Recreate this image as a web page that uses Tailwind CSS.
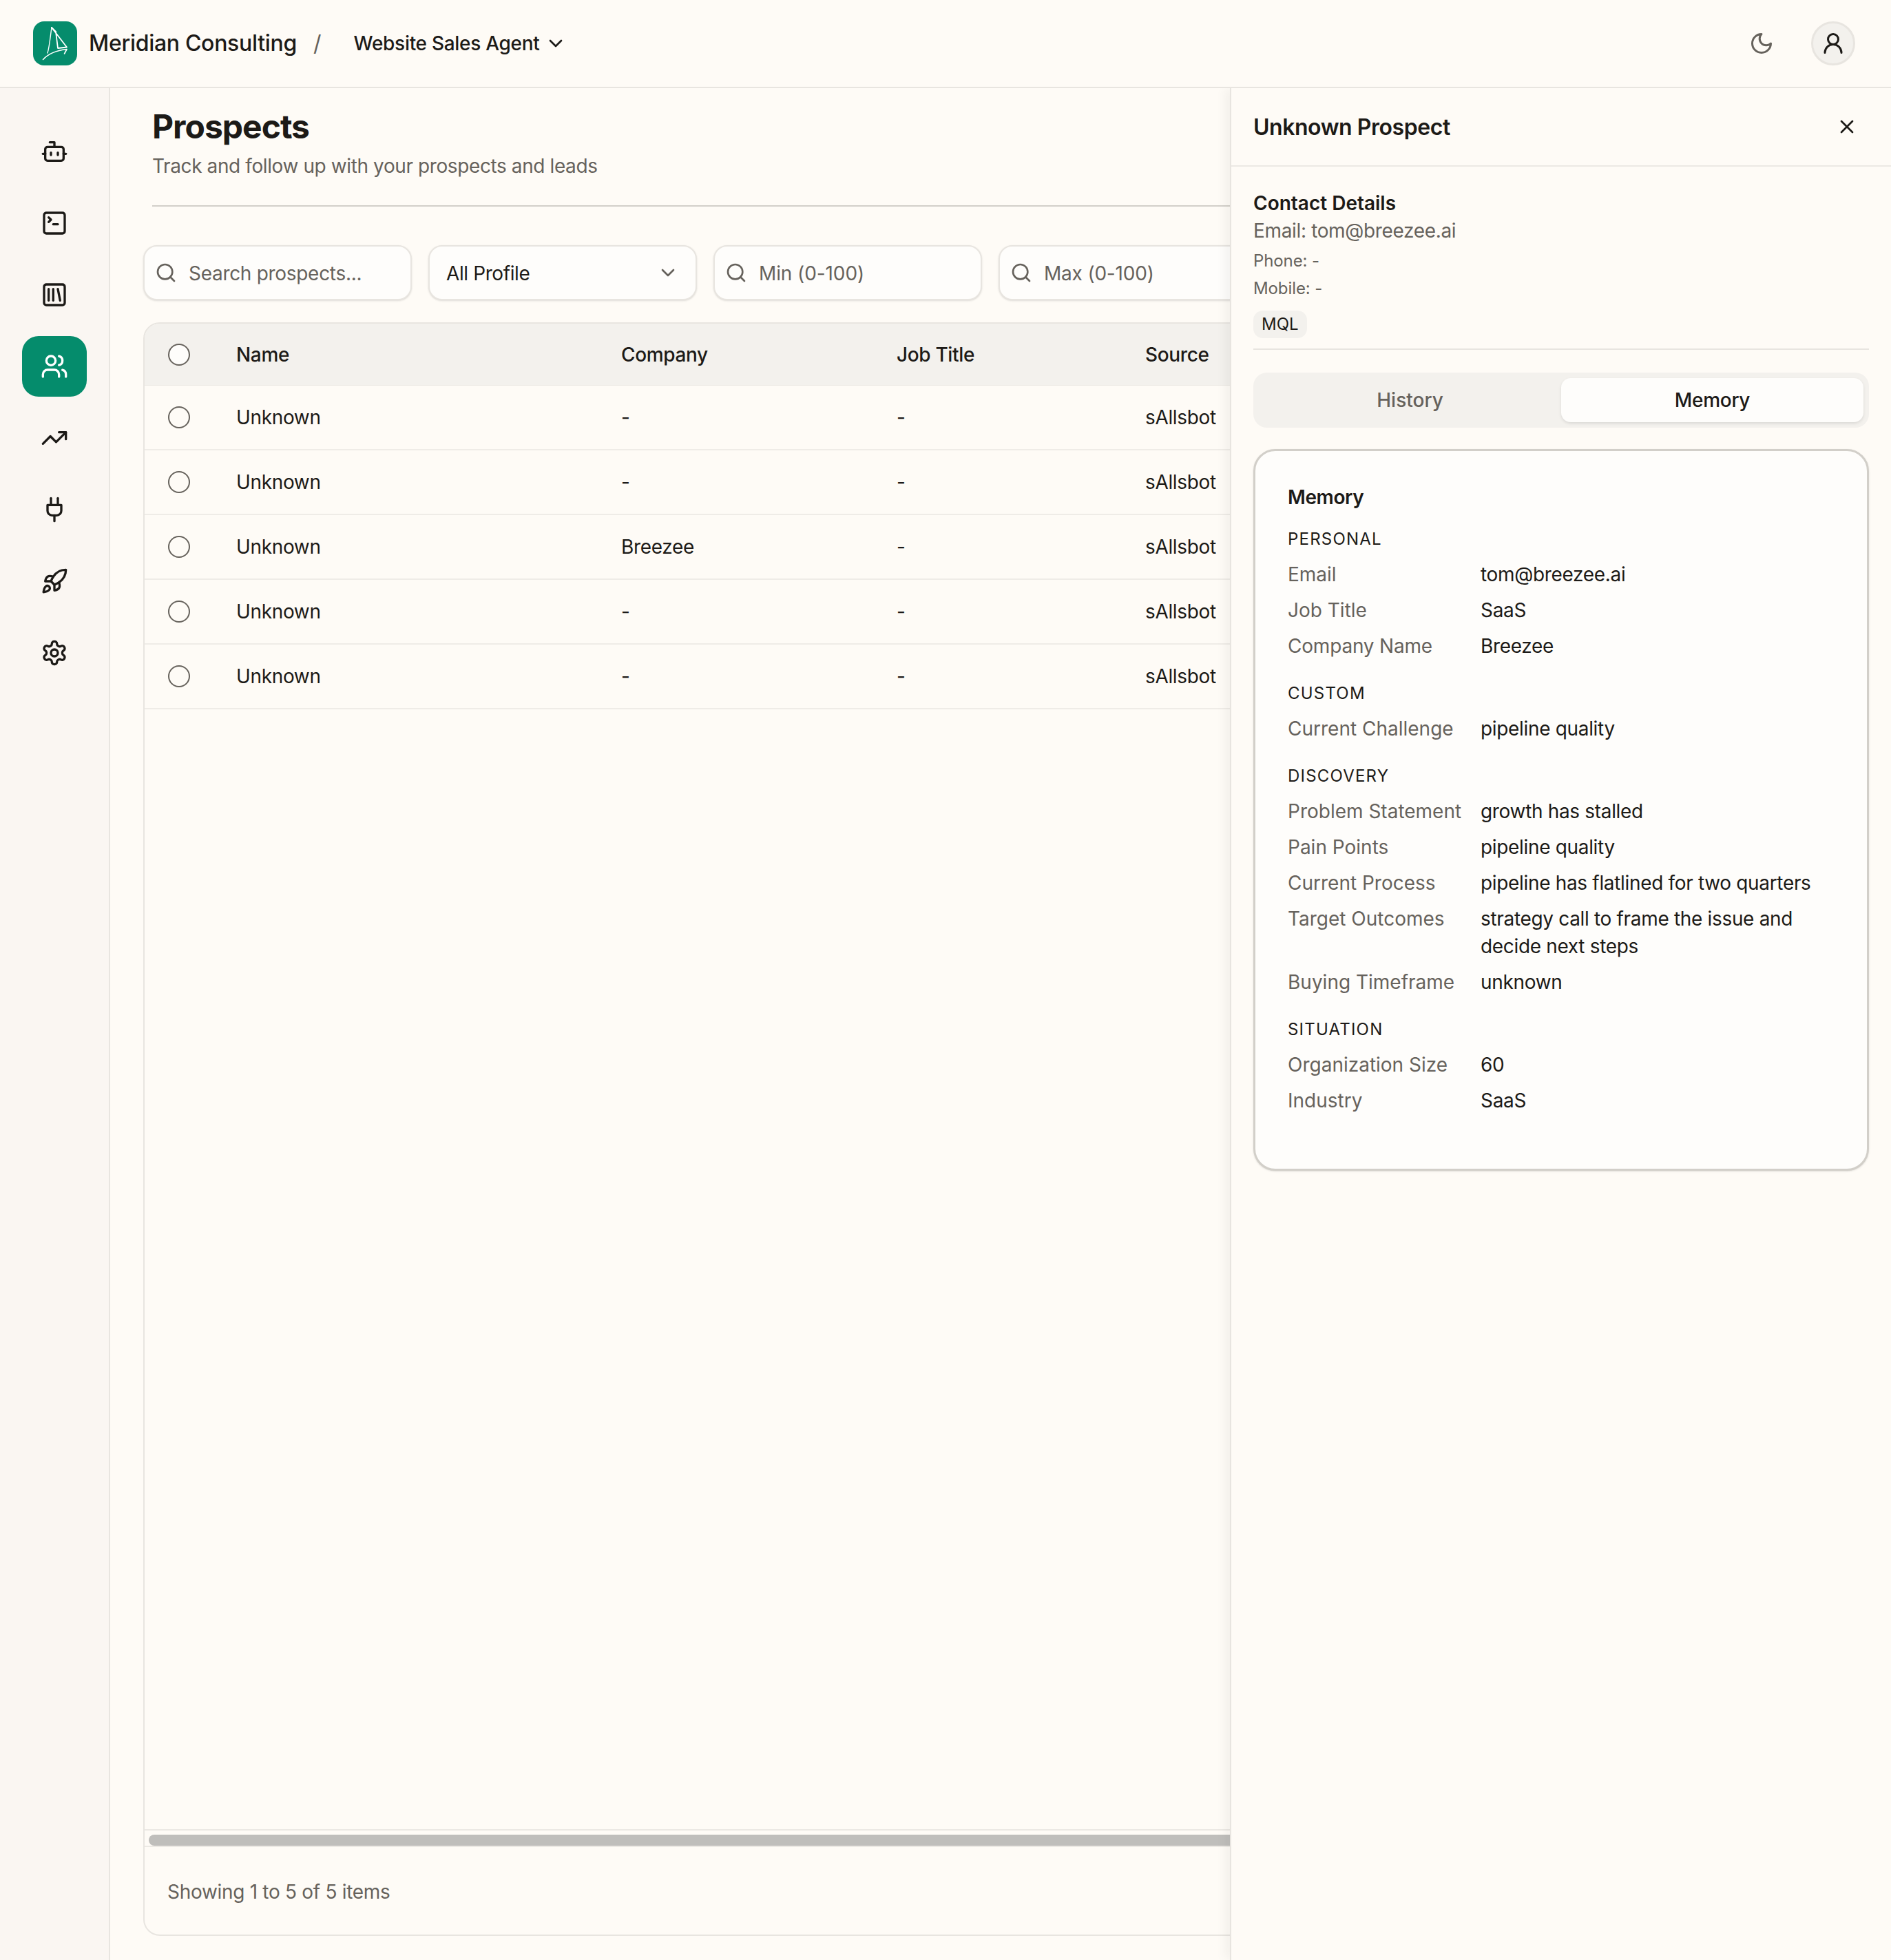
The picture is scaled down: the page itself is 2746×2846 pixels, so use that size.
<!DOCTYPE html>
<html lang="en">
<head>
<meta charset="utf-8">
<title>Prospects</title>
<script src="https://cdn.jsdelivr.net/npm/@tailwindcss/browser@4"></script>
</head>
<body class="m-0 font-['Inter',sans-serif] text-[#1c1a17] bg-[#fefbf6]">
<div class="relative w-[2746px] h-[2846px] overflow-hidden flex flex-col bg-[#fefbf6]">
  <!-- Top bar -->
  <header class="relative z-20 h-[128px] shrink-0 flex items-center pl-[48px] pr-[48px] border-b-2 border-[#e8e5e0] bg-[#fefbf6]">
    <div class="w-[64px] h-[64px] rounded-[16px] bg-[#058c6c] flex items-center justify-center">
      <svg viewBox="0 0 64 64" class="w-[64px] h-[64px]" fill="none" stroke="#fff" stroke-linecap="round" stroke-linejoin="round">
        <path d="M27 9 C25 22 24 36 21 46" stroke-width="1.4"/>
        <path d="M27 9 L49 37.5 L36 39 L33 15" stroke-width="1.8"/>
        <path d="M27 9 L33 15" stroke-width="1.8"/>
        <path d="M14.5 55.5 C22 47 36 42 49 40.5 L45.5 47" stroke-width="1.6"/>
      </svg>
    </div>
    <span class="ml-[17px] text-[32px] leading-[40px] font-medium tracking-[-0.3px]">Meridian Consulting</span>
    <span class="ml-[24px] text-[32px] leading-[40px] text-[#66625c]">/</span>
    <span class="ml-[47px] text-[28px] leading-[40px] font-medium tracking-[-0.3px]">Website Sales Agent</span>
    <svg class="ml-[8px] w-[32px] h-[32px]" viewBox="0 0 24 24" fill="none" stroke="currentColor" stroke-width="2" stroke-linecap="round" stroke-linejoin="round"><path d="m6 9 6 6 6-6"/></svg>
    <div class="ml-auto flex items-center">
      <svg class="w-[36px] h-[36px] text-[#66625c]" viewBox="0 0 24 24" fill="none" stroke="currentColor" stroke-width="2" stroke-linecap="round" stroke-linejoin="round"><path d="M12 3a6 6 0 0 0 9 9 9 9 0 1 1-9-9Z"/></svg>
      <div class="ml-[54px] mr-[4px] w-[64px] h-[64px] rounded-full bg-[#f3f1ed] border-[3px] border-[#e8e5e0] flex items-center justify-center">
        <svg class="w-[36px] h-[36px]" viewBox="0 0 24 24" fill="none" stroke="currentColor" stroke-width="2" stroke-linecap="round" stroke-linejoin="round"><circle cx="12" cy="8" r="5"/><path d="M20 21a8 8 0 0 0-16 0"/></svg>
      </div>
    </div>
  </header>

  <div class="flex flex-1 min-h-0">
    <!-- Sidebar -->
    <nav class="w-[160px] shrink-0 bg-[#faf6f2] border-r-2 border-[#e8e5e0] flex flex-col gap-[16px] pl-[32px] pr-[32px] pt-[48px]">
      <div class="h-[88px] flex items-center justify-center">
        <svg class="w-[40px] h-[40px]" viewBox="0 0 24 24" fill="none" stroke="currentColor" stroke-width="2" stroke-linecap="round" stroke-linejoin="round"><path d="M12 8V4H8"/><rect width="16" height="12" x="4" y="8" rx="2"/><path d="M2 14h2"/><path d="M20 14h2"/><path d="M15 13v2"/><path d="M9 13v2"/></svg>
      </div>
      <div class="h-[88px] flex items-center justify-center">
        <svg class="w-[40px] h-[40px]" viewBox="0 0 24 24" fill="none" stroke="currentColor" stroke-width="2" stroke-linecap="round" stroke-linejoin="round"><path d="m7 11 2-2-2-2"/><path d="M11 13h4"/><rect width="18" height="18" x="3" y="3" rx="2"/></svg>
      </div>
      <div class="h-[88px] flex items-center justify-center">
        <svg class="w-[40px] h-[40px]" viewBox="0 0 24 24" fill="none" stroke="currentColor" stroke-width="2" stroke-linecap="round" stroke-linejoin="round"><rect width="18" height="18" x="3" y="3" rx="2"/><path d="M7 7v10"/><path d="M11 7v10"/><path d="m15 7 2 10"/></svg>
      </div>
      <div class="h-[88px] rounded-[24px] bg-[#058c6c] text-white flex items-center justify-center">
        <svg class="w-[40px] h-[40px]" viewBox="0 0 24 24" fill="none" stroke="currentColor" stroke-width="2" stroke-linecap="round" stroke-linejoin="round"><path d="M16 21v-2a4 4 0 0 0-4-4H6a4 4 0 0 0-4 4v2"/><path d="M16 3.128a4 4 0 0 1 0 7.744"/><path d="M22 21v-2a4 4 0 0 0-3-3.87"/><circle cx="9" cy="7" r="4"/></svg>
      </div>
      <div class="h-[88px] flex items-center justify-center">
        <svg class="w-[40px] h-[40px]" viewBox="0 0 24 24" fill="none" stroke="currentColor" stroke-width="2" stroke-linecap="round" stroke-linejoin="round"><polyline points="22 7 13.5 15.5 8.5 10.5 2 17"/><polyline points="16 7 22 7 22 13"/></svg>
      </div>
      <div class="h-[88px] flex items-center justify-center">
        <svg class="w-[40px] h-[40px]" viewBox="0 0 24 24" fill="none" stroke="currentColor" stroke-width="2" stroke-linecap="round" stroke-linejoin="round"><path d="M12 22v-5"/><path d="M9 8V2"/><path d="M15 8V2"/><path d="M18 8v5a4 4 0 0 1-4 4h-4a4 4 0 0 1-4-4V8Z"/></svg>
      </div>
      <div class="h-[88px] flex items-center justify-center">
        <svg class="w-[40px] h-[40px]" viewBox="0 0 24 24" fill="none" stroke="currentColor" stroke-width="2" stroke-linecap="round" stroke-linejoin="round"><path d="M4.5 16.5c-1.5 1.26-2 5-2 5s3.74-.5 5-2c.71-.84.7-2.13-.09-2.91a2.18 2.18 0 0 0-2.91-.09z"/><path d="m12 15-3-3a22 22 0 0 1 2-3.95A12.88 12.88 0 0 1 22 2c0 2.72-.78 7.5-6 11a22.35 22.35 0 0 1-4 2z"/><path d="M9 12H4s.55-3.03 2-4c1.62-1.08 5 0 5 0"/><path d="M12 15v5s3.03-.55 4-2c1.08-1.62 0-5 0-5"/></svg>
      </div>
      <div class="h-[88px] flex items-center justify-center">
        <svg class="w-[40px] h-[40px]" viewBox="0 0 24 24" fill="none" stroke="currentColor" stroke-width="2" stroke-linecap="round" stroke-linejoin="round"><path d="M12.22 2h-.44a2 2 0 0 0-2 2v.18a2 2 0 0 1-1 1.73l-.43.25a2 2 0 0 1-2 0l-.15-.08a2 2 0 0 0-2.73.73l-.22.38a2 2 0 0 0 .73 2.73l.15.1a2 2 0 0 1 1 1.72v.51a2 2 0 0 1-1 1.74l-.15.09a2 2 0 0 0-.73 2.73l.22.38a2 2 0 0 0 2.73.73l.15-.08a2 2 0 0 1 2 0l.43.25a2 2 0 0 1 1 1.73V20a2 2 0 0 0 2 2h.44a2 2 0 0 0 2-2v-.18a2 2 0 0 1 1-1.73l.43-.25a2 2 0 0 1 2 0l.15.08a2 2 0 0 0 2.73-.73l.22-.39a2 2 0 0 0-.73-2.73l-.15-.08a2 2 0 0 1-1-1.74v-.5a2 2 0 0 1 1-1.74l.15-.09a2 2 0 0 0 .73-2.73l-.22-.38a2 2 0 0 0-2.73-.73l-.15.08a2 2 0 0 1-2 0l-.43-.25a2 2 0 0 1-1-1.73V4a2 2 0 0 0-2-2z"/><circle cx="12" cy="12" r="3"/></svg>
      </div>
    </nav>

    <!-- Main -->
    <main class="flex-1 min-w-0 flex flex-col pl-[48px] pb-[35px] overflow-hidden">
      <div class="ml-[13px] pt-[24px]">
        <h1 class="text-[48px] leading-[64px] font-bold tracking-[-1px]">Prospects</h1>
        <p class="mt-[5px] text-[28px] leading-[40px] text-[#66625c] tracking-[-0.4px]">Track and follow up with your prospects and leads</p>
        <div class="mt-[37px] h-[2px] bg-[#d2cfc9]"></div>
      </div>

      <div class="mt-[56px] flex gap-[24px]">
        <div class="w-[390px] h-[80px] shrink-0 rounded-[20px] border-2 border-[#e8e5e0] bg-[#fefdfb] shadow-sm flex items-center pl-[15px] text-[#66625c]">
          <svg class="w-[32px] h-[32px] shrink-0" viewBox="0 0 24 24" fill="none" stroke="currentColor" stroke-width="2" stroke-linecap="round" stroke-linejoin="round"><circle cx="11" cy="11" r="8"/><path d="m21 21-4.3-4.3"/></svg>
          <span class="ml-[17px] pt-[2px] text-[28px] leading-[40px] tracking-[-0.3px]">Search prospects...</span>
        </div>
        <div class="w-[390px] h-[80px] shrink-0 rounded-[20px] border-2 border-[#e8e5e0] bg-[#fefdfb] shadow-sm flex items-center pl-[24px] pr-[24px]">
          <span class="pt-[2px] text-[28px] leading-[40px] tracking-[-0.4px]">All Profile</span>
          <svg class="ml-auto w-[32px] h-[32px] text-[#66625c]" viewBox="0 0 24 24" fill="none" stroke="currentColor" stroke-width="2" stroke-linecap="round" stroke-linejoin="round"><path d="m6 9 6 6 6-6"/></svg>
        </div>
        <div class="w-[390px] h-[80px] shrink-0 rounded-[20px] border-2 border-[#e8e5e0] bg-[#fefdfb] shadow-sm flex items-center pl-[15px] text-[#66625c]">
          <svg class="w-[32px] h-[32px] shrink-0" viewBox="0 0 24 24" fill="none" stroke="currentColor" stroke-width="2" stroke-linecap="round" stroke-linejoin="round"><circle cx="11" cy="11" r="8"/><path d="m21 21-4.3-4.3"/></svg>
          <span class="ml-[17px] pt-[2px] text-[28px] leading-[40px] tracking-[-0.1px]">Min (0-100)</span>
        </div>
        <div class="w-[390px] h-[80px] shrink-0 rounded-[20px] border-2 border-[#e8e5e0] bg-[#fefdfb] shadow-sm flex items-center pl-[15px] text-[#66625c]">
          <svg class="w-[32px] h-[32px] shrink-0" viewBox="0 0 24 24" fill="none" stroke="currentColor" stroke-width="2" stroke-linecap="round" stroke-linejoin="round"><circle cx="11" cy="11" r="8"/><path d="m21 21-4.3-4.3"/></svg>
          <span class="ml-[17px] pt-[2px] text-[28px] leading-[40px] tracking-[-0.2px]">Max (0-100)</span>
        </div>
      </div>

      <!-- Table card -->
      <section class="mt-[32px] flex-1 min-h-0 w-[2000px] rounded-[24px] border-2 border-[#e8e5e0] flex flex-col overflow-hidden">
        <div class="h-[90px] shrink-0 grid grid-cols-[133px_559px_400px_361px_1fr] items-center bg-[#f3f1ed] text-[28px] leading-[40px] font-medium tracking-[-0.35px] border-b border-[#eceae5]">
          <span class="ml-[34px] w-[32px] h-[32px] rounded-full border-2 border-[#66625c] bg-[#fefdfb]"></span>
          <span>Name</span><span>Company</span><span>Job Title</span><span>Source</span>
        </div>
        <div class="h-[94px] shrink-0 grid grid-cols-[133px_559px_400px_361px_1fr] items-center text-[28px] leading-[40px] tracking-[-0.35px] border-b-2 border-[#efece7]">
          <span class="ml-[34px] w-[32px] h-[32px] rounded-full border-2 border-[#66625c]"></span>
          <span>Unknown</span><span>-</span><span>-</span><span>sAllsbot</span>
        </div>
        <div class="h-[94px] shrink-0 grid grid-cols-[133px_559px_400px_361px_1fr] items-center text-[28px] leading-[40px] tracking-[-0.35px] border-b-2 border-[#efece7]">
          <span class="ml-[34px] w-[32px] h-[32px] rounded-full border-2 border-[#66625c]"></span>
          <span>Unknown</span><span>-</span><span>-</span><span>sAllsbot</span>
        </div>
        <div class="h-[94px] shrink-0 grid grid-cols-[133px_559px_400px_361px_1fr] items-center text-[28px] leading-[40px] tracking-[-0.35px] border-b-2 border-[#efece7]">
          <span class="ml-[34px] w-[32px] h-[32px] rounded-full border-2 border-[#66625c]"></span>
          <span>Unknown</span><span>Breezee</span><span>-</span><span>sAllsbot</span>
        </div>
        <div class="h-[94px] shrink-0 grid grid-cols-[133px_559px_400px_361px_1fr] items-center text-[28px] leading-[40px] tracking-[-0.35px] border-b-2 border-[#efece7]">
          <span class="ml-[34px] w-[32px] h-[32px] rounded-full border-2 border-[#66625c]"></span>
          <span>Unknown</span><span>-</span><span>-</span><span>sAllsbot</span>
        </div>
        <div class="h-[94px] shrink-0 grid grid-cols-[133px_559px_400px_361px_1fr] items-center text-[28px] leading-[40px] tracking-[-0.35px] border-b-2 border-[#efece7]">
          <span class="ml-[34px] w-[32px] h-[32px] rounded-full border-2 border-[#66625c]"></span>
          <span>Unknown</span><span>-</span><span>-</span><span>sAllsbot</span>
        </div>
        <div class="flex-1"></div>
        <div class="h-[26px] shrink-0 border-t-2 border-b-2 border-[#ece9e4] pt-[6px] pl-[6px]">
          <div class="h-[16px] rounded-full bg-[#bfbebb]"></div>
        </div>
        <div class="h-[127px] shrink-0 flex items-center pl-[33px] pt-[2px] text-[28px] leading-[40px] tracking-[-0.3px] text-[#66625c]">Showing 1 to 5 of 5 items</div>
      </section>
    </main>
  </div>

  <!-- Detail panel, over the page -->
  <aside class="absolute z-10 right-0 top-[128px] bottom-0 w-[960px] bg-[#fefbf6] border-l-2 border-[#e8e5e0] shadow-[-6px_0_16px_rgba(0,0,0,0.05)]">
    <div class="h-[114px] pl-[32px] pr-[48px] flex items-center border-b-2 border-[#ece9e4]">
      <h2 class="pt-[2px] text-[32px] leading-[44px] font-semibold tracking-[-0.45px]">Unknown Prospect</h2>
      <svg class="ml-auto w-[32px] h-[32px]" viewBox="0 0 24 24" fill="none" stroke="currentColor" stroke-width="2" stroke-linecap="round" stroke-linejoin="round"><path d="M18 6 6 18"/><path d="m6 6 12 12"/></svg>
    </div>
    <div class="px-[32px] pt-[33px]">
      <h3 class="text-[28px] leading-[40px] font-semibold">Contact Details</h3>
      <p class="text-[28px] leading-[40px] text-[#66625c] tracking-[-0.35px]">Email: tom@breezee.ai</p>
      <p class="mt-[4px] text-[24px] leading-[40px] text-[#66625c] tracking-[-0.1px]">Phone: -</p>
      <p class="text-[24px] leading-[40px] text-[#66625c] tracking-[-0.1px]">Mobile: -</p>
      <span class="mt-[12px] inline-flex h-[40px] px-[12px] items-center rounded-[14px] bg-[#f3f1ed] text-[24px] leading-[32px]">MQL</span>
      <div class="mt-[15px] h-[2px] bg-[#e8e5e0]"></div>

      <div class="mt-[33px] h-[80px] rounded-[20px] bg-[#f3f1ed] p-[8px] grid grid-cols-2 text-[28px] leading-[40px]">
        <div class="flex items-center justify-center text-[#66625c] font-medium">History</div>
        <div class="flex items-center justify-center rounded-[14px] bg-[#fefdfb] shadow-[0_2px_4px_rgba(0,0,0,0.1)] font-medium tracking-[-0.3px]">Memory</div>
      </div>

      <div class="mt-[31px] h-[1048px] rounded-[32px] border-[3px] border-[#d2cfc9] bg-[#fefdfb] shadow-sm pl-[47px] pr-[47px] pt-[47px]">
        <h4 class="text-[28px] leading-[40px] font-semibold tracking-[-0.4px]">Memory</h4>
        <div class="mt-[25px]">
          <h5 class="text-[24px] leading-[32px] font-normal tracking-[1.2px]">PERSONAL</h5>
          <dl class="mt-[15px] grid grid-cols-[280px_1fr] gap-y-[12px] text-[28px] leading-[40px]">
            <dt class="text-[#66625c]">Email</dt><dd class="tracking-[-0.33px]">tom@breezee.ai</dd>
            <dt class="text-[#66625c]">Job Title</dt><dd class="tracking-[-0.33px]">SaaS</dd>
            <dt class="text-[#66625c] tracking-[-0.2px]">Company Name</dt><dd class="tracking-[-0.33px]">Breezee</dd>
          </dl>
        </div>
        <div class="mt-[33px]">
          <h5 class="text-[24px] leading-[32px] font-normal tracking-[1.2px]">CUSTOM</h5>
          <dl class="mt-[15px] grid grid-cols-[280px_1fr] gap-y-[12px] text-[28px] leading-[40px]">
            <dt class="text-[#66625c]">Current Challenge</dt><dd class="tracking-[-0.33px]">pipeline quality</dd>
          </dl>
        </div>
        <div class="mt-[33px]">
          <h5 class="text-[24px] leading-[32px] font-normal tracking-[1.2px]">DISCOVERY</h5>
          <dl class="mt-[15px] grid grid-cols-[280px_1fr] gap-y-[12px] text-[28px] leading-[40px]">
            <dt class="text-[#66625c]">Problem Statement</dt><dd class="tracking-[-0.33px]">growth has stalled</dd>
            <dt class="text-[#66625c]">Pain Points</dt><dd class="tracking-[-0.33px]">pipeline quality</dd>
            <dt class="text-[#66625c]">Current Process</dt><dd class="tracking-[-0.33px]">pipeline has flatlined for two quarters</dd>
            <dt class="text-[#66625c]">Target Outcomes</dt><dd class="tracking-[-0.33px]">strategy call to frame the issue and<br>decide next steps</dd>
            <dt class="text-[#66625c]">Buying Timeframe</dt><dd class="tracking-[-0.33px]">unknown</dd>
          </dl>
        </div>
        <div class="mt-[33px]">
          <h5 class="text-[24px] leading-[32px] font-normal tracking-[1.2px]">SITUATION</h5>
          <dl class="mt-[15px] grid grid-cols-[280px_1fr] gap-y-[12px] text-[28px] leading-[40px]">
            <dt class="text-[#66625c]">Organization Size</dt><dd class="tracking-[-0.33px]">60</dd>
            <dt class="text-[#66625c]">Industry</dt><dd class="tracking-[-0.33px]">SaaS</dd>
          </dl>
        </div>
      </div>
    </div>
  </aside>
</div>
</body>
</html>
